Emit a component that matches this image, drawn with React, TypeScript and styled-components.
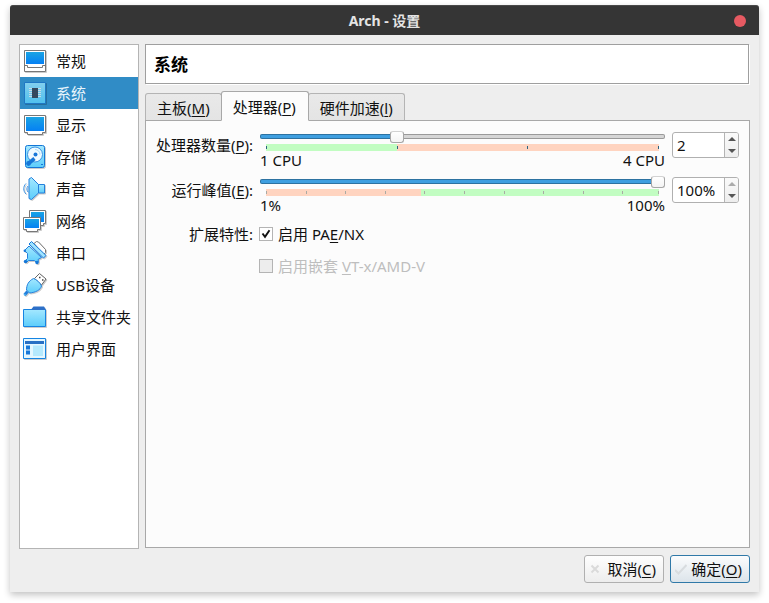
import React, { useState } from "react";
import styled, { createGlobalStyle, css } from "styled-components";

const GlobalStyle = createGlobalStyle`
  *, *::before, *::after { box-sizing: border-box; }
  body {
    margin: 0;
    background: #ffffff;
    color: #111111;
    font: 15px/20px "Noto Sans", "Noto Sans CJK SC", sans-serif;
  }
  button, input { font: inherit; color: inherit; }
`;

const Page = styled.div`
  display: flex;
  min-height: 100vh;
  padding: 5px 10px 11px;
`;

const Window = styled.main`
  flex: 1;
  display: flex;
  flex-direction: column;
  min-width: 0;
  background: #eeeeee;
  border-radius: 3px 3px 0 0;
  box-shadow: 0 3px 7px rgba(0, 0, 0, 0.24);
`;

const TitleBar = styled.header`
  display: grid;
  grid-template-columns: 1fr auto 1fr;
  align-items: center;
  height: 30px;
  padding: 0 13px;
  background: #353535;
  border-top: 1px solid #494949;
  border-radius: 3px 3px 0 0;
`;

const Title = styled.h1`
  grid-column: 2;
  margin: 0;
  color: #e4e4e4;
  font-size: 14px;
  line-height: 20px;
  font-weight: 700;
`;

const CloseButton = styled.button`
  justify-self: end;
  width: 12px;
  height: 12px;
  padding: 0;
  border: 0;
  border-radius: 50%;
  background: #e65a62;
`;

const Body = styled.div`
  flex: 1;
  display: grid;
  grid-template-columns: 120px minmax(0, 1fr);
  grid-template-rows: 1fr auto;
  gap: 6px;
  padding: 9px;
`;

const Sidebar = styled.nav`
  background: #ffffff;
  border: 1px solid #b4b4b4;
`;

const NavItem = styled.button<{ $active: boolean }>`
  display: flex;
  align-items: center;
  gap: 9px;
  width: 100%;
  height: 32px;
  padding: 0 3px;
  border: 0;
  text-align: left;
  white-space: nowrap;
  background: ${(p) => (p.$active ? "#308cc6" : "transparent")};
  color: ${(p) => (p.$active ? "#e6f4fc" : "#111111")};
`;

const Glyph = styled.svg`
  flex: none;
  width: 24px;
  height: 24px;
  filter: drop-shadow(1px 1px 0 rgba(0, 0, 0, 0.2));
`;

const Content = styled.section`
  display: flex;
  flex-direction: column;
  min-width: 0;
  padding-bottom: 1px;
`;

const Heading = styled.h2`
  margin: 0 1px 7px 0;
  padding: 10px 8px 8px;
  border: 1px solid #9f9f9f;
  box-shadow: 1px 1px 0 #ffffff;
  background: #ffffff;
  color: #000000;
  font-size: 17px;
  line-height: 20px;
  font-weight: 700;
`;

const TabStrip = styled.div`
  display: flex;
  align-items: flex-end;
  height: 30px;
  margin-bottom: -1px;
`;

const Tab = styled.button<{ $active: boolean }>`
  padding: 2px 11px 0;
  border: 1px solid #b4b4b4;
  border-radius: 3px 3px 0 0;
  white-space: nowrap;
  ${(p) =>
    p.$active
      ? css`
          z-index: 1;
          height: 30px;
          margin: 0 -1px;
          padding-right: 12px;
          border-color: #a8a8a8;
          border-bottom-color: #fcfcfc;
          background: #fcfcfc;
        `
      : css`
          height: 28px;
          border-bottom-color: #a8a8a8;
          background: linear-gradient(#e9e9e9, #e4e4e4);
        `}
`;

const Panel = styled.div`
  flex: 1;
  padding: 10px;
  border: 1px solid #a8a8a8;
  background: #fcfcfc;
`;

const Form = styled.div`
  display: grid;
  grid-template-columns: 97px minmax(0, 1fr) 67px;
  column-gap: 7px;
  row-gap: 6px;
`;

const FieldLabel = styled.label`
  line-height: 28px;
  text-align: right;
  white-space: nowrap;
`;

const GroupLabel = styled.span`
  line-height: 26px;
  text-align: right;
`;

const SliderBlock = styled.div`
  display: flex;
  flex-direction: column;
  height: 39px;
`;

const Range = styled.input`
  appearance: none;
  flex: none;
  width: 100%;
  height: 11px;
  margin: 0;
  background: transparent;

  &::-webkit-slider-runnable-track {
    height: 5px;
    border-radius: 2px;
    box-shadow: inset 0 0 0 1px rgba(0, 0, 0, 0.28);
    background: linear-gradient(
      to right,
      #3f9fe0 var(--fill),
      #d6d6d6 var(--fill)
    );
  }

  &::-webkit-slider-thumb {
    appearance: none;
    width: 14px;
    height: 12px;
    margin-top: -3px;
    border: 1px solid #a6a6a6;
    border-top-color: #d2d2d2;
    border-radius: 3px;
    background: linear-gradient(#ffffff, #f4f4f4);
  }
`;

const Scale = styled.div`
  position: relative;
  flex: none;
  height: 7px;
  margin: 2px 6px 0;
`;

const Tick = styled.i<{ $color: string }>`
  position: absolute;
  top: 2px;
  width: 1px;
  height: 3px;
  background: ${(p) => p.$color};
`;

const ScaleText = styled.div`
  display: flex;
  justify-content: space-between;
  line-height: 18px;
`;

const Spin = styled.div`
  display: grid;
  grid-template-columns: minmax(0, 1fr) 14px;
  height: 26px;
  margin-top: 1px;
  border: 1px solid #b0b0b0;
  border-radius: 3px;
  background: #ffffff;
  overflow: hidden;
`;

const SpinInput = styled.input`
  min-width: 0;
  padding: 0 4px;
  border: 0;
  background: transparent;
  outline: none;
`;

const SpinButtons = styled.div`
  display: flex;
  flex-direction: column;
  border-left: 1px solid #b4b4b4;
  background: linear-gradient(#fafafa, #eeeeee);
`;

const StepButton = styled.button`
  flex: 1;
  display: flex;
  align-items: center;
  justify-content: center;
  padding: 0;
  border: 0;
  background: transparent;
  color: #555555;
  &:disabled { color: #ababab; }
`;

const Check = styled.label<{ $disabled?: boolean }>`
  grid-column: 2 / 4;
  display: flex;
  align-items: center;
  gap: 5px;
  height: 26px;
  color: ${(p) => (p.$disabled ? "#bebebe" : "#111111")};
`;

const checkMark = encodeURIComponent(
  '<svg xmlns="http://www.w3.org/2000/svg" viewBox="0 0 12 12"><path d="M2.5 5.5 5 8.8 9.5 2.2" fill="none" stroke="#111" stroke-width="1.9"/></svg>'
);

const CheckBox = styled.input`
  appearance: none;
  width: 14px;
  height: 14px;
  margin: 0 0 0 -1px;
  border: 1px solid #b4b4b4;
  background: #ffffff;
  &:checked { background: #ffffff url("data:image/svg+xml,${checkMark}") center / 12px; }
  &:disabled { background: #ededed; }
`;

const Footer = styled.footer`
  grid-column: 1 / 3;
  display: flex;
  justify-content: flex-end;
  gap: 6px;
`;

const DialogButton = styled.button<{ $primary?: boolean }>`
  display: flex;
  align-items: center;
  justify-content: space-between;
  width: 80px;
  height: 28px;
  padding: 0 7px 0 4px;
  border: 1px solid ${(p) => (p.$primary ? "#3079a8" : "#b0b0b0")};
  border-radius: 3px;
  white-space: nowrap;
  background: ${(p) =>
    p.$primary
      ? "linear-gradient(#fbfcfd, #dce4ea)"
      : "linear-gradient(#fefefe, #ededed)"};
`;

const Accel = styled.span`
  text-decoration: underline;
  text-underline-offset: 2px;
  text-decoration-thickness: 1px;
`;

const Gradients = () => (
  <defs>
    <linearGradient id="screen" x1="0" y1="0" x2="0" y2="1">
      <stop offset="0" stopColor="#1aa4e4" />
      <stop offset="1" stopColor="#0580f4" />
    </linearGradient>
    <linearGradient id="sky" x1="0" y1="0" x2="0" y2="1">
      <stop offset="0" stopColor="#a4e8ff" />
      <stop offset="1" stopColor="#5ccdfb" />
    </linearGradient>
    <linearGradient id="chip" x1="0" y1="0" x2="0" y2="1">
      <stop offset="0" stopColor="#83d0ee" />
      <stop offset="1" stopColor="#4fc0ee" />
    </linearGradient>
  </defs>
);

const glyphs: Record<string, React.ReactNode> = {
  general: (
    <>
      <path d="M1.5 1.5h21v21h-21z" fill="#fff" stroke="#777" />
      <path d="M3 3h18v12H3z" fill="url(#screen)" />
      <path d="M1.5 16.5h3v2h15v-2h3" fill="none" stroke="#777" />
    </>
  ),
  system: (
    <>
      <path d="M1.5 1.5h21v21h-21z" fill="url(#chip)" stroke="#1f78c4" />
      <path d="M6 7.5h12M6 9.5h12M6 11.5h12M6 13.5h12M6 15.5h12" stroke="#c6dbe6" />
      <path d="M9 7h6v10H9z" fill="#35495e" />
    </>
  ),
  display: (
    <>
      <path d="M1.5 2.5h21v17h-3v2h-15v-2h-3z" fill="#fff" stroke="#777" />
      <path d="M3 4h18v14H3z" fill="url(#screen)" />
    </>
  ),
  storage: (
    <>
      <rect x="2.5" y=".5" width="19" height="22" rx="2" fill="url(#sky)" stroke="#1476d6" />
      <circle cx="12" cy="9.5" r="7.5" fill="#eefaff" stroke="#3b90e2" />
      <path d="M12 4.5a5 5 0 0 1 5 5" fill="none" stroke="#a9dff8" />
      <circle cx="12.5" cy="9.5" r="2" fill="#1677d8" />
      <path d="m5.5 18.5 6-5" stroke="#1677d8" strokeWidth="3.6" />
      <circle cx="5.5" cy="18.5" r="2.4" fill="#1677d8" />
      <path d="M18 19.5h2" stroke="#1677d8" />
    </>
  ),
  sound: (
    <>
      <path d="M6 2 8.5.5l7 7V16l-7 6.5L6 21.5z" fill="url(#sky)" stroke="#2480dc" strokeLinejoin="round" />
      <path d="M15.5 7.5h6V16h-6z" fill="url(#sky)" stroke="#2480dc" />
      <path d="M3 6.5c-3 3-3 7.500 0 10.500M5 9c-1.500 2-1.500 4 0 6" fill="none" stroke="#3b90e2" />
    </>
  ),
  network: (
    <>
      <path d="M6.500 1.500h16v13h-2v2h-14z" fill="#fff" stroke="#777" />
      <path d="M8 3h13v10H8z" fill="url(#screen)" />
      <path d="M.5 8.500h17v12h-3v2h-11v-2h-3z" fill="#fff" stroke="#777" />
      <path d="M2 10h14v9H2z" fill="url(#screen)" />
    </>
  ),
  serial: (
    <>
      <path d="m11 2.500 2.500-2 2 .5L22.500 8.500v3l-2 2z" fill="#fff" stroke="#777" strokeLinejoin="round" />
      <path d="M6 5 1.500 9.500l3 3v5L2 20l1.500 1.500 2-2h6l2.500 2.500 1.500-1.500-.5-2 3.500-2z" fill="url(#sky)" stroke="#2480dc" strokeLinejoin="round" />
      <path d="M6 3 8.500.5 23 14.500 20.500 17z" fill="#9fe4ff" stroke="#1677d8" strokeLinejoin="round" />
      <circle cx="1.800" cy="9.800" r="1.200" fill="#1677d8" />
      <circle cx="2.500" cy="20.500" r="1.700" fill="#1677d8" />
      <circle cx="14" cy="21.500" r="1.700" fill="#1677d8" />
    </>
  ),
  usb: (
    <>
      <path d="m11.500 5.500 5-5 6.500 5.500-4.500 6z" fill="#fff" stroke="#666" strokeLinejoin="round" />
      <path d="M16 4.500h1.500M19 7h1.500" stroke="#444" strokeWidth="1.500" />
      <path d="M10.500 5.500c3 1 6.500 4 8 7.500-1 4-6 6.500-12 7l-3-3C3.500 12 5.500 8 10.500 5.500z" fill="url(#sky)" stroke="#2480dc" />
      <path d="m4.500 18.500-3 3.500" stroke="#2480dc" strokeWidth="3" />
      <circle cx="1.800" cy="21.800" r="1" fill="#4cb4f4" />
    </>
  ),
  folder: (
    <>
      <path d="M.5 4.500h22v17H.5z" fill="url(#sky)" stroke="#1684e2" />
      <path d="M8.500 5V4l2-2.500H21L22.500 4v1z" fill="#2d70c8" />
    </>
  ),
  ui: (
    <>
      <path d="M.5 1.500h22v20H.5z" fill="#e4f7ff" stroke="#1684e2" />
      <path d="M2 4h19v3H2z" fill="#2870c4" />
      <path d="M3 8.500h4v4H3zM3 13.500h4v4H3z" fill="#1677d8" />
      <path d="M10 8.500h10V19H10z" fill="#b5e9fd" />
    </>
  ),
};

const navItems = [
  ["general", "常规"],
  ["system", "系统"],
  ["display", "显示"],
  ["storage", "存储"],
  ["sound", "声音"],
  ["network", "网络"],
  ["serial", "串口"],
  ["usb", "USB设备"],
  ["folder", "共享文件夹"],
  ["ui", "用户界面"],
];

const tabs = [
  ["主板", "M"],
  ["处理器", "P"],
  ["硬件加速", "l"],
];

interface SliderFieldProps {
  id: string;
  label: string;
  accel: string;
  min: number;
  max: number;
  initial: number;
  suffix?: string;
  lowText: string;
  highText: string;
  split: number;
  lowColor: string;
  highColor: string;
  ticks: number[];
  tickColor: string;
}

const GREEN = "#c2fdc2";
const RED = "#ffd4c0";

function SliderField(p: SliderFieldProps) {
  const [value, setValue] = useState(p.initial);
  const place = (v: number) => ((v - p.min) / (p.max - p.min)) * 100;
  const set = (v: number) => setValue(Math.min(p.max, Math.max(p.min, v || p.min)));
  const split = place(p.split);

  return (
    <>
      <FieldLabel htmlFor={p.id}>
        {p.label}(<Accel>{p.accel}</Accel>):
      </FieldLabel>
      <SliderBlock>
        <Range
          id={p.id}
          type="range"
          min={p.min}
          max={p.max}
          value={value}
          onChange={(e) => set(Number(e.target.value))}
          style={{ "--fill": `${place(value)}%` } as React.CSSProperties}
        />
        <Scale
          style={{
            background: `linear-gradient(to right, ${p.lowColor} ${split}%, ${p.highColor} ${split}%)`,
          }}
        >
          {p.ticks.map((t) => (
            <Tick key={t} $color={p.tickColor} style={{ left: `calc((100% - 1px) * ${place(t) / 100})` }} />
          ))}
        </Scale>
        <ScaleText>
          <span>{p.lowText}</span>
          <span>{p.highText}</span>
        </ScaleText>
      </SliderBlock>
      <Spin>
        <SpinInput
          aria-label={p.label}
          inputMode="numeric"
          value={`${value}${p.suffix ?? ""}`}
          onChange={(e) => set(parseInt(e.target.value, 10))}
        />
        <SpinButtons>
          <StepButton aria-label="+" disabled={value >= p.max} onClick={() => set(value + 1)}>
            <svg width="8" height="4" viewBox="0 0 8 4"><path d="M0 4 4 0l4 4z" fill="currentColor" /></svg>
          </StepButton>
          <StepButton aria-label="-" disabled={value <= p.min} onClick={() => set(value - 1)}>
            <svg width="8" height="4" viewBox="0 0 8 4"><path d="m0 0 4 4 4-4z" fill="currentColor" /></svg>
          </StepButton>
        </SpinButtons>
      </Spin>
    </>
  );
}

export default function App() {
  const [page, setPage] = useState("system");
  const [tab, setTab] = useState("P");
  const [pae, setPae] = useState(true);

  return (
    <Page>
      <GlobalStyle />
      <Window>
        <TitleBar>
          <Title>Arch - 设置</Title>
          <CloseButton aria-label="关闭" />
        </TitleBar>
        <Body>
          <Sidebar>
            {navItems.map(([key, text]) => (
              <NavItem key={key} $active={key === page} onClick={() => setPage(key)}>
                <Glyph viewBox="0 0 24 24" aria-hidden="true">
                  <Gradients />
                  {glyphs[key]}
                </Glyph>
                {text}
              </NavItem>
            ))}
          </Sidebar>
          <Content>
            <Heading>系统</Heading>
            <TabStrip role="tablist">
              {tabs.map(([text, key]) => (
                <Tab key={key} role="tab" aria-selected={key === tab} $active={key === tab} onClick={() => setTab(key)}>
                  {text}(<Accel>{key}</Accel>)
                </Tab>
              ))}
            </TabStrip>
            <Panel role="tabpanel">
              <Form>
                <SliderField
                  id="cpus" label="处理器数量" accel="P" min={1} max={4} initial={2}
                  lowText="1 CPU" highText="4 CPU" split={2}
                  lowColor={GREEN} highColor={RED} ticks={[1, 2, 3, 4]} tickColor="#2c6480"
                />
                <SliderField
                  id="cap" label="运行峰值" accel="E" min={1} max={100} initial={100} suffix="%"
                  lowText="1%" highText="100%" split={40} lowColor={RED} highColor={GREEN}
                  ticks={[1, 11, 21, 31, 41, 51, 61, 71, 81, 91, 100]} tickColor="#a9aaa4"
                />
                <GroupLabel>扩展特性:</GroupLabel>
                <Check>
                  <CheckBox type="checkbox" checked={pae} onChange={(e) => setPae(e.target.checked)} />
                  <span>启用 PA<Accel>E</Accel>/NX</span>
                </Check>
                <Check $disabled>
                  <CheckBox type="checkbox" disabled />
                  <span>启用嵌套 <Accel>V</Accel>T-x/AMD-V</span>
                </Check>
              </Form>
            </Panel>
          </Content>
          <Footer>
            <DialogButton>
              <svg width="12" height="12" viewBox="0 0 12 12" aria-hidden="true">
                <path d="m2.500 2.500 7 7m0-7-7 7" stroke="#dadada" strokeWidth="2" />
              </svg>
              <span>取消(<Accel>C</Accel>)</span>
            </DialogButton>
            <DialogButton $primary>
              <svg width="12" height="12" viewBox="0 0 12 12" aria-hidden="true">
                <path d="m0 7 3.500 3.500L11.500 2" fill="none" stroke="#d8dcdf" strokeWidth="2" />
              </svg>
              <span>确定(<Accel>O</Accel>)</span>
            </DialogButton>
          </Footer>
        </Body>
      </Window>
    </Page>
  );
}
